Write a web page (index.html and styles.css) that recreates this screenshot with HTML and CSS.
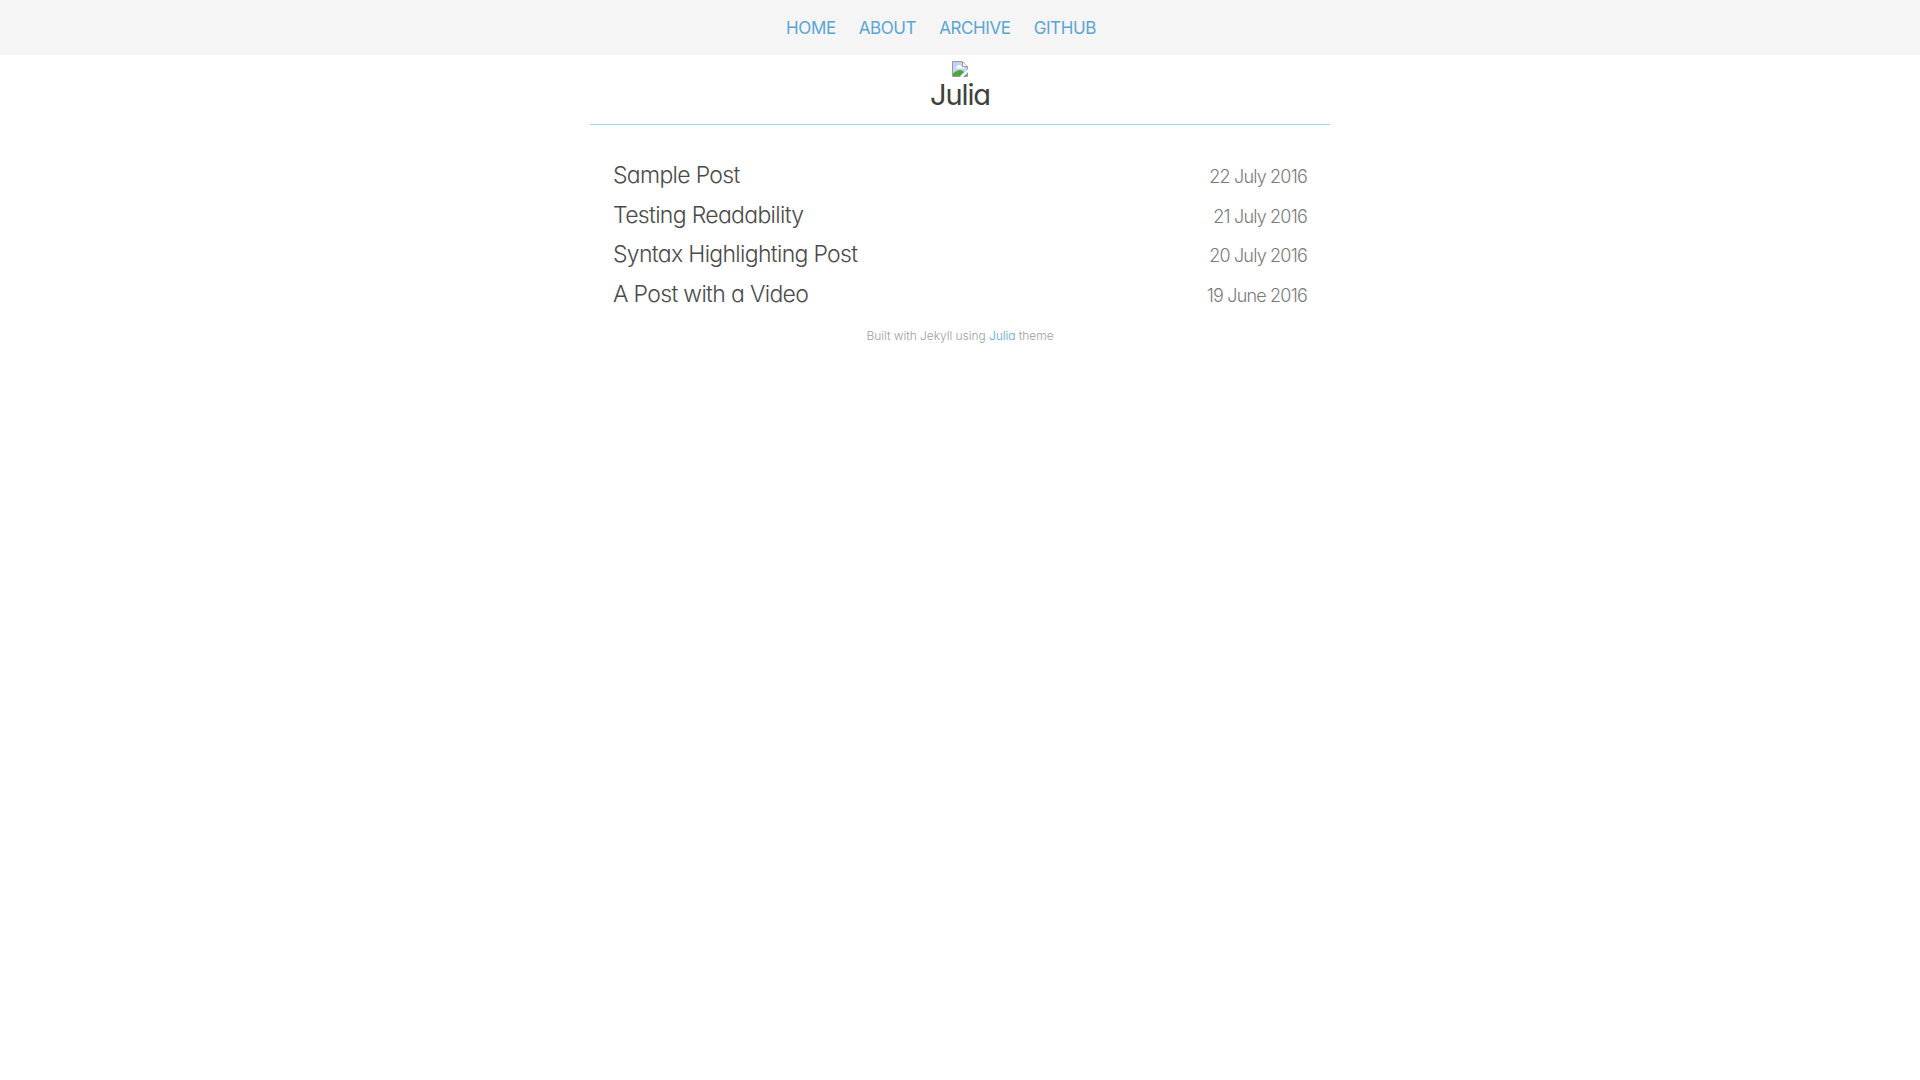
FILE: index.html
```html
<!DOCTYPE html>
<html lang="en">
<head>
<meta charset="utf-8">
<title>Julia</title>
<link rel="stylesheet" href="styles.css">
</head>
<body>
<nav class="topnav">
  <a href="#">HOME</a>
  <a href="#">ABOUT</a>
  <a href="#">ARCHIVE</a>
  <a href="#">GITHUB</a>
</nav>
<div class="wrap">
  <header class="masthead">
    <svg class="broken" viewBox="0 0 16 16" width="16" height="16" aria-hidden="true">
      <path d="M0.5 0.5H10.5L15.5 5.5V15.5H0.5Z" fill="#fff" stroke="#9a9a9a"/>
      <path d="M1 1H10V6H15V15H1Z" fill="#bfd3f6"/>
      <path d="M5 5.5C5.5 3.5 8.5 3.5 9.5 5.5C11 5.5 12.5 6.5 12.5 7.5H4C3.5 6.5 4 5.5 5 5.5Z" fill="#fff"/>
      <path d="M10.5 1V5.5H15.5" fill="#fff" stroke="#9a9a9a"/>
      <path d="M1 15V12.5C3.5 10.5 6 9 8 9C10 9 11 10 12 11L8 15Z" fill="#4da63c"/>
      <path d="M12.5 15L15 12.5V15Z" fill="#4da63c"/>
      <path d="M8 16L16 8V11L11 16Z" fill="#fff"/>
    </svg>
    <h1 class="site-title">Julia</h1>
  </header>
  <main class="posts">
    <div class="post"><a class="post-title" href="#">Sample Post</a><span class="post-date">22 July 2016</span></div>
    <div class="post"><a class="post-title" href="#">Testing Readability</a><span class="post-date">21 July 2016</span></div>
    <div class="post"><a class="post-title" href="#">Syntax Highlighting Post</a><span class="post-date">20 July 2016</span></div>
    <div class="post"><a class="post-title" href="#">A Post with a Video</a><span class="post-date">19 June 2016</span></div>
  </main>
  <footer class="foot">Built with Jekyll using <a href="#">Julia</a> theme</footer>
</div>
</body>
</html>
```
FILE: styles.css
```css
html, body { margin: 0; padding: 0; background: #fff; }
body {
  font-family: "Inter", "Lato", sans-serif;
  font-feature-settings: "cv11" 1;
  color: #404040;
}
a { text-decoration: none; color: inherit; }
.topnav {
  height: 55px;
  padding-right: 38px;
  background: #f5f5f5;
  display: flex;
  justify-content: center;
  align-items: center;
  gap: 23px;
  font-size: 17px;
  letter-spacing: -0.4px;
}
.topnav a { color: #5aa5d6; }
.wrap { width: 740px; margin: 0 auto; }
.masthead {
  height: 63px;
  border-bottom: 1px solid #a6cfe9;
  display: flex;
  flex-direction: column;
  align-items: center;
  padding-top: 6px;
}
.broken { display: block; flex: none; }
.site-title {
  margin: 3px 0 0;
  font-size: 29px;
  line-height: 30px;
  font-weight: 400;
  letter-spacing: -1.1px;
}
.posts { padding: 31px 23px 0; }
.post {
  display: flex;
  justify-content: space-between;
  align-items: baseline;
  height: 39.5px;
}
.post-title { font-size: 23px; line-height: 39px; font-weight: 300; letter-spacing: -0.68px; color: #4a4a4a; }
.post-date { font-size: 18px; font-weight: 300; color: #7a7a7a; letter-spacing: -0.8px; }
.foot {
  margin-top: 14px;
  text-align: center;
  font-size: 12px;
  font-weight: 300;
  letter-spacing: -0.05px;
  color: #a0a0a0;
}
.foot a { color: #5aa5d6; }
```
